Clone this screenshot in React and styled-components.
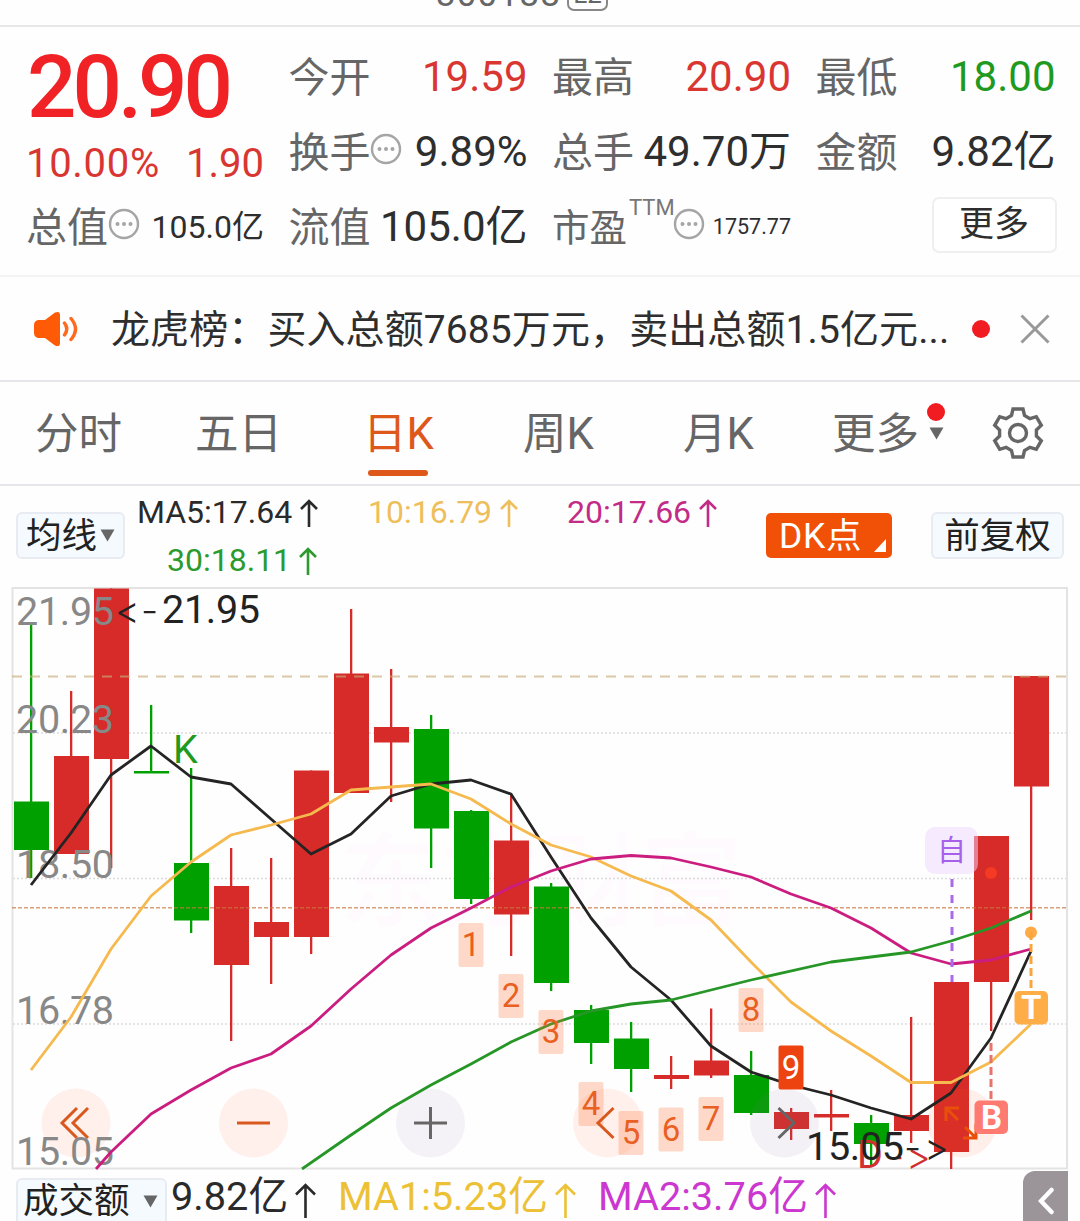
import styled, { createGlobalStyle } from 'styled-components'

const RED = '#d62b28'
const GREEN = '#00a000'

// center x, colour, body top, body bottom, wick top, wick bottom
const candles = [
  [31, GREEN, 801.5, 850, 624, 878],
  [71, RED, 756, 854, 691, 854],
  [111, RED, 588.5, 759, 588.5, 868],
  [151, GREEN, 771, 773.5, 705, 773],
  [191, GREEN, 863, 920.5, 768, 933],
  [231, RED, 886, 965, 848, 1041],
  [271, RED, 922, 937, 858, 984],
  [311, RED, 770.5, 937, 770.5, 954],
  [351, RED, 673.5, 793, 609, 793],
  [391, RED, 727, 742.5, 669, 802],
  [431, GREEN, 729, 828.5, 715, 868],
  [471, GREEN, 811, 899, 810, 904],
  [511, RED, 840.5, 914.5, 795, 956],
  [551, GREEN, 886.5, 983, 883, 991],
  [591, GREEN, 1010, 1043, 1005, 1064],
  [631, GREEN, 1038.5, 1069, 1022, 1092],
  [671, RED, 1075, 1079, 1056, 1089],
  [711, RED, 1060.5, 1075.5, 1008.5, 1078],
  [751, GREEN, 1075, 1113, 1051, 1115],
  [791, RED, 1112, 1129, 1108, 1140],
  [831, RED, 1114, 1117.5, 1090, 1131],
  [871, GREEN, 1123, 1144, 1115, 1165],
  [911, RED, 1115, 1131, 1017, 1143],
  [951, RED, 982, 1152, 982, 1169],
  [991, RED, 836, 982, 836, 1031],
  [1031, RED, 676, 786.5, 676, 920],
]

const ma5 =
  '31,885 71,833 111,775 151,746 191,777 231,784 271,819 311,854 351,834 391,796 431,784 471,780 511,794 551,857 591,918 631,967 671,1000 711,1046 751,1072 791,1085 831,1095 871,1108 911,1119 951,1093 991,1038 1031,951'
const ma10 =
  '31,1070 71,1017 111,949 151,896 191,862 231,835 271,825 311,814 351,790 391,787 431,784 471,799 511,824 551,845 591,857 631,876 671,891 711,920 751,962 791,1002 831,1031 871,1056 911,1082.5 951,1082.5 991,1062 1031,1024'
const ma20 =
  '96,1169 111,1152 151,1114 191,1090 231,1068 271,1054 311,1026 351,989 391,955 431,928 471,908 511,887 551,871 591,859 631,855.5 671,858 711,867 751,877 791,894 831,908 871,928 911,953 951,964 991,960 1031,949'
const ma30 =
  '302,1169 351,1135 391,1108 431,1085 471,1064 511,1042 551,1024 591,1011 631,1004 671,1000 711,990 751,980 831,962 911,952 951,941 991,928 1031,911'

const priceLabels = [
  ['21.95', 624.5],
  ['20.23', 733],
  ['18.50', 878],
  ['16.78', 1024],
  ['15.05', 1165],
]

const countBadges = [
  [1, 471, 923],
  [2, 511, 974],
  [3, 551, 1010],
  [4, 591, 1082],
  [5, 631, 1111],
  [6, 671, 1107.5],
  [7, 711, 1097],
  [8, 751, 988],
  [9, 791, 1045.5],
]

const InfoDots = () => (
  <InfoIcon width="32" height="32" viewBox="0 0 32 32">
    <circle cx="16" cy="16" r="14" fill="none" stroke="#a5a5a5" strokeWidth="2.4" />
    {[9.5, 16, 22.5].map(x => (
      <circle key={x} cx={x} cy="16" r="2" fill="#a5a5a5" />
    ))}
  </InfoIcon>
)

const UpArrow = ({ w = 18, h = 28 }) => (
  <svg width={w} height={h} viewBox={`0 0 ${w} ${h}`} fill="none" stroke="currentColor" strokeWidth="2.6">
    <path d={`M${w / 2} ${h}V2M1 ${w / 2 + 1}L${w / 2} 2L${w - 1} ${w / 2 + 1}`} />
  </svg>
)

const Caret = () => (
  <svg width="15" height="13" viewBox="0 0 15 13">
    <path d="M0.5 0.5H14.5L7.5 12.5Z" fill="#666" />
  </svg>
)

const Speaker = () => (
  <svg width="44" height="36" viewBox="0 0 44 36" fill="none">
    <path
      d="M4 9H11L21 1.5Q26 -0.5 26 4V32Q26 36.500 21 34.500L11 27H4Q0 26 0 22V14Q0 10 4 9Z"
      fill="#ff5a05"
    />
    <path d="M30.500 12Q35 18 30.500 24M37 7.500Q46 18 37 28.500" stroke="#ff6a20" strokeWidth="3.400" strokeLinecap="round" />
  </svg>
)

const Gear = () => (
  <svg width="56" height="56" viewBox="-28 -28 56 56" fill="none" stroke="#666" strokeWidth="3.4">
    <path d="M-6.500 -17.500L-5 -24H5L6.500 -17.500L11.900 -14.400L18.300 -16.300L23.300 -7.700L18.400 -3.100V3.100L23.300 7.700L18.300 16.300L11.900 14.400L6.500 17.500L5 24H-5L-6.500 17.500L-11.900 14.400L-18.300 16.300L-23.300 7.700L-18.400 3.100V-3.100L-23.300 -7.700L-18.300 -16.300L-11.900 -14.400Z" />
    <circle r="8.5" />
  </svg>
)

const Chart = () => (
  <ChartSvg width="1080" height="583" viewBox="0 587 1080 583">
    <WatermarkText x="340" y="918" textLength="402">
      东方财富
    </WatermarkText>
    <g stroke="#dcdcdc" strokeWidth="1.5" strokeDasharray="2 2">
      <path d="M13 733H1067M13 878.500H1067M13 1024H1067" />
    </g>
    <path d="M12.500 588H1067V1168.500H12.500Z" fill="none" stroke="#e3e3e3" strokeWidth="2" />

    {candles.map(([x, color, top, bottom, high, low]) => (
      <g key={x} fill={color}>
        <rect x={x - 1} y={high} width="2.300" height={low - high} />
        <rect x={x - 17} y={top} width="35" height={bottom - top} />
      </g>
    ))}

    <path d="M12 676.500H1067" stroke="#c8aa78" strokeOpacity="0.65" strokeWidth="1.800" strokeDasharray="10 8" />
    <path d="M12 907.700H1067" stroke="#c87840" strokeOpacity="0.7" strokeWidth="1.600" strokeDasharray="4 2" />

    {[
      [76, '#fff0ec'],
      [253.5, '#fff0ec'],
      [430.5, '#f5f2f7'],
      [607.5, '#fff0ec'],
    ].map(([x, fill]) => (
      <circle key={x} cx={x} cy="1123" r="34.500" fill={fill} />
    ))}
    <circle cx="784.500" cy="1123" r="34.500" fill="#8a70a0" fillOpacity="0.09" />
    <circle cx="962" cy="1123" r="34.500" fill="#ff5a20" fillOpacity="0.09" />

    <path d="M77 1108L62 1123L77 1138M88 1108L73 1123L88 1138" fill="none" stroke="#d9581e" strokeWidth="3" />

    {priceLabels.map(([label, y]) => (
      <ChartText key={label} x="16" y={y} textLength="98" $color="#888">
        {label}
      </ChartText>
    ))}

    <g fill="none" strokeWidth="2.800" strokeLinejoin="round">
      <polyline points={ma5} stroke="#242424" />
      <polyline points={ma10} stroke="#f5b94e" />
      <polyline points={ma20} stroke="#cb1d80" />
      <polyline points={ma30} stroke="#269626" />
    </g>

    <ArrowText x="115" y="624" $color="#222">
      &lt;
    </ArrowText>
    <ArrowText x="141" y="624" $color="#222">
      -
    </ArrowText>
    <ChartText x="162" y="623" textLength="98" $color="#222">
      21.95
    </ChartText>
    <ChartText x="173" y="763" $color="#1f9a1f">
      K
    </ChartText>
    <ChartText x="857" y="1168" $color="#d03030">
      D
    </ChartText>
    <ArrowText x="887" y="1170" $color="#d03030">
      -
    </ArrowText>
    <ArrowText x="906" y="1170" $color="#d03030">
      &gt;
    </ArrowText>
    <ChartText x="806" y="1160" textLength="98" $color="#222">
      15.05
    </ChartText>
    <ArrowText x="904" y="1161" $color="#222">
      -
    </ArrowText>
    <ArrowText x="924" y="1161" $color="#222">
      &gt;
    </ArrowText>

    {countBadges.map(([n, x, y]) => (
      <g key={n}>
        <rect
          x={x - 12.5}
          y={y}
          width="25"
          height="44"
          rx="2"
          fill={n === 9 ? '#ec4311' : '#ff6a2a'}
          fillOpacity={n === 9 ? 1 : 0.25}
        />
        <CountText x={x} y={y + 33} $active={n === 9}>
          {n}
        </CountText>
      </g>
    ))}

    <g fill="none" stroke="#d9581e" strokeWidth="3">
      <path d="M237 1123H270" />
      <path d="M613.500 1108L598 1123L613.500 1138" />
      <path d="M946 1121V1108H959M946.500 1108.500L958 1120M976 1124V1138H963M975.500 1137.500L965 1127" stroke="#e8500a" />
    </g>
    <g fill="none" stroke="#666" strokeWidth="3">
      <path d="M414 1123H447M430.500 1107V1139" />
      <path d="M778.500 1108L794 1123L778.500 1138" />
    </g>

    <rect x="925" y="827" width="53" height="47" rx="10" fill="#edd5ff" fillOpacity="0.5" />
    <OwnText x="951.500" y="861">
      自
    </OwnText>
    <path d="M952 879V982" stroke="#aa68ee" strokeWidth="3" strokeDasharray="8 8" />
    <circle cx="991" cy="873" r="6" fill="#f53a23" />
    <circle cx="1031" cy="932.500" r="6" fill="#ffaa45" />
    <path d="M1031 932V990" stroke="#f9a53f" strokeWidth="3" strokeDasharray="8 4" />
    <path d="M991 1043V1100" stroke="#e8736c" strokeWidth="3" strokeDasharray="8 4" />
    <rect x="1014.500" y="991" width="33.500" height="33.500" rx="5" fill="#ffad47" />
    <MarkText x="1031.300" y="1019">
      T
    </MarkText>
    <rect x="974.500" y="1100.500" width="33.500" height="33.500" rx="5" fill="#ff7a70" />
    <MarkText x="991.500" y="1128.500">
      B
    </MarkText>
  </ChartSvg>
)

const App = () => (
  <Page>
    <GlobalStyle />
    <TitleStrip>
      <Code>300188</Code>
      <LevelTag>L2</LevelTag>
    </TitleStrip>

    <Quote>
      <Column $width={237}>
        <Price>20.90</Price>
        <Change>
          <span>10.00%</span>
          <span>1.90</span>
        </Change>
        <Row $height={71}>
          <Label>总值</Label>
          <InfoDots />
          <Value $size={32}>105.0亿</Value>
        </Row>
      </Column>
      <Column $width={238}>
        <Row>
          <Label>今开</Label>
          <Value $color="#d93632">19.59</Value>
        </Row>
        <Row>
          <Label>换手</Label>
          <InfoDots />
          <Value>9.89%</Value>
        </Row>
        <Row>
          <Label>流值</Label>
          <Value>105.0亿</Value>
        </Row>
      </Column>
      <Column $width={238}>
        <Row>
          <Label>最高</Label>
          <Value $color="#d93632">20.90</Value>
        </Row>
        <Row>
          <Label>总手</Label>
          <Value>49.70万</Value>
        </Row>
        <Row>
          <Label $size={37.5}>市盈</Label>
          <Ttm>TTM</Ttm>
          <InfoDots />
          <Value $size={21.5}>1757.77</Value>
        </Row>
      </Column>
      <Column $width={239}>
        <Row>
          <Label>最低</Label>
          <Value $color="#1f9a1f">18.00</Value>
        </Row>
        <Row>
          <Label>金额</Label>
          <Value>9.82亿</Value>
        </Row>
        <Row>
          <MoreButton>更多</MoreButton>
        </Row>
      </Column>
    </Quote>

    <News>
      <Speaker />
      <NewsText>龙虎榜：买入总额7685万元，卖出总额1.5亿元...</NewsText>
      <Dot />
      <svg width="30" height="30" viewBox="0 0 30 30" stroke="#999" strokeWidth="3">
        <path d="M1.500 1.500L28.500 28.500M28.500 1.500L1.500 28.500" />
      </svg>
    </News>

    <Tabs>
      <Tab>分时</Tab>
      <Tab>五日</Tab>
      <Tab $active>日K</Tab>
      <Tab>周K</Tab>
      <Tab>月K</Tab>
      <Tab>
        更多
        <MoreMark>
          <Dot />
          <Caret />
        </MoreMark>
      </Tab>
      <GearTab>
        <Gear />
      </GearTab>
    </Tabs>

    <Indicators>
      <Chip $width={109}>
        均线
        <Caret />
      </Chip>
      <Averages>
        <Average $color="#2a2a2a">
          MA5:17.64
          <UpArrow />
        </Average>
        <Average $color="#efbe5c">
          10:16.79
          <UpArrow />
        </Average>
        <Average $color="#c22c86">
          20:17.66
          <UpArrow />
        </Average>
        <Average $color="#2c9a2c" $indent={30}>
          30:18.11
          <UpArrow />
        </Average>
      </Averages>
      <DkButton>
        DK点
        <svg width="12" height="13" viewBox="0 0 12 13">
          <path d="M12 0V13H0Z" fill="#fff" />
        </svg>
      </DkButton>
      <Chip $width={133}>前复权</Chip>
    </Indicators>

    <Chart />

    <Footer>
      <VolumeChip>
        成交额
        <Caret />
      </VolumeChip>
      <Volume $width={167} $color="#2a2a2a">
        9.82亿
        <UpArrow w={21} h={35} />
      </Volume>
      <Volume $width={260} $color="#ecc136">
        MA1:5.23亿
        <UpArrow w={21} h={35} />
      </Volume>
      <Volume $width={260} $color="#cb37cf">
        MA2:3.76亿
        <UpArrow w={21} h={35} />
      </Volume>
      <Drawer>
        <svg width="16" height="28" viewBox="0 0 16 28" fill="none">
          <path d="M13.500 3L3 14L13.500 25" stroke="#fff" strokeWidth="4.500" strokeLinecap="round" />
        </svg>
      </Drawer>
    </Footer>
  </Page>
)

const GlobalStyle = createGlobalStyle`
  * {
    box-sizing: border-box;
  }

  body {
    margin: 0;
    background: #fff;
    font-family: Roboto, 'Noto Sans CJK SC', sans-serif;
  }

  svg {
    flex: none;
    display: block;
  }
`

const Page = styled.div`
  width: 1080px;
  height: 1221px;
  overflow: hidden;
  background: #fefefe;
  color: #2e2e2e;
  white-space: nowrap;
`

const TitleStrip = styled.div`
  height: 27px;
  display: flex;
  justify-content: center;
  align-items: flex-end;
  gap: 6px;
  padding: 0 36px 14px 0;
  overflow: hidden;
  border-bottom: 2px solid #e8e8e8;
  color: #666;
`

const Code = styled.span`
  margin-bottom: 3px;
  font-size: 35px;
  line-height: 26px;
  letter-spacing: 1.2px;
`

const LevelTag = styled.span`
  border: 2px solid #888;
  border-radius: 7px;
  width: 41px;
  font-size: 26px;
  line-height: 30px;
  text-align: center;
`

const Quote = styled.div`
  height: 250px;
  display: flex;
  gap: 25.5px;
  padding: 12px 0 0 27px;
  border-bottom: 2px solid #f3f3f3;
`

const Column = styled.div`
  width: ${props => props.$width}px;
  display: flex;
  flex-direction: column;
`

const Row = styled.div`
  height: ${props => props.$height || 75}px;
  display: flex;
  align-items: center;
`

const InfoIcon = styled.svg`
  margin: -6px 0 0 -0.5px;
`

const Price = styled.div`
  height: 96px;
  line-height: 97px;
  font-size: 87px;
  font-weight: 500;
  letter-spacing: -4px;
  color: #f02225;
`

const Change = styled.div`
  height: 56px;
  display: flex;
  justify-content: space-between;
  align-items: center;
  font-size: 40px;
  color: #d93632;

  span:first-child {
    margin-left: -1px;
    letter-spacing: 0.7px;
  }
`

const Label = styled.span`
  margin: 3px 0 0 -1px;
  font-size: ${props => props.$size || 41}px;
  line-height: 50px;
  color: #666;
`

const Value = styled.span`
  margin: 1px 0 0 auto;
  font-size: ${props => props.$size || 42}px;
  line-height: 50px;
  color: ${props => props.$color || '#2e2e2e'};
`

const Ttm = styled.span`
  align-self: flex-start;
  margin: 6px -1px 0 2px;
  font-size: 22px;
  color: #777;
`

const MoreButton = styled.button`
  margin: -3px -1px 0 auto;
  width: 125px;
  height: 56px;
  padding: 0;
  border: 2px solid #f0eef0;
  border-radius: 7px;
  background: #fff;
  font: inherit;
  font-size: 35px;
  line-height: 50px;
  color: #2e2e2e;
`

const News = styled.div`
  height: 105px;
  display: flex;
  align-items: center;
  padding: 0 30px 0 34px;
  border-bottom: 2px solid #e6e6ea;
`

const NewsText = styled.span`
  width: 861px;
  margin: -5px 0 0 33px;
  font-size: 39px;
  letter-spacing: 0.1px;
`

const Dot = styled.i`
  width: 18px;
  height: 18px;
  margin-right: 30px;
  border-radius: 50%;
  background: #f01c22;
`

const Tabs = styled.div`
  height: 104px;
  display: grid;
  grid-template-columns: repeat(6, 160px) 1fr;
  border-bottom: 2px solid #e6e6ea;
`

const Tab = styled.div`
  display: flex;
  justify-content: center;
  align-items: center;
  padding: 0 3px 6px 0;
  font-size: 43.5px;
  color: ${props => (props.$active ? '#dd581a' : '#666')};
  position: relative;

  &::after {
    content: '';
    display: ${props => (props.$active ? 'block' : 'none')};
    position: absolute;
    bottom: 8px;
    left: 48px;
    width: 60px;
    height: 6px;
    border-radius: 3px;
    background: #dd581a;
  }
`

const GearTab = styled(Tab)`
  padding: 0 4px 0 0;
`

const MoreMark = styled.span`
  display: flex;
  flex-direction: column;
  align-items: center;
  gap: 6px;
  margin: -18px -20px 0 8px;

  ${Dot} {
    margin: 0;
  }
`

const Indicators = styled.div`
  height: 101px;
  display: flex;
  align-items: flex-start;
  padding: 0 15px 0 16px;
`

const Chip = styled.div`
  width: ${props => props.$width}px;
  height: 47px;
  margin-top: 26px;
  display: flex;
  justify-content: center;
  align-items: center;
  gap: 3px;
  border: 2px solid #e8ebf2;
  border-radius: 6px;
  background: #f5faff;
  font-size: 35.5px;
  line-height: 42px;
  color: #222;
`

const Averages = styled.div`
  width: 641px;
  padding: 2px 0 0 12px;
  display: grid;
  grid-template-columns: 231px 199px 1fr;
  grid-auto-rows: 48px;
`

const Average = styled.div`
  display: flex;
  align-items: center;
  gap: 7.5px;
  padding-left: ${props => props.$indent || 0}px;
  font-size: 32px;
  color: ${props => props.$color};

  svg {
    margin-top: 2px;
  }
`

const DkButton = styled.div`
  width: 126px;
  height: 45px;
  margin: 27px 39px 0 0;
  display: flex;
  align-items: center;
  justify-content: space-between;
  padding: 0 6px 0 13px;
  border-radius: 5px;
  background: #f05106;
  color: #fff;
  font-size: 35.5px;
  letter-spacing: 0.7px;
  line-height: 42px;

  svg {
    margin-top: 20px;
  }
`

const ChartSvg = styled.svg`
  overflow: hidden;
`

const ChartText = styled.text`
  font-size: 39.5px;
  fill: ${props => props.$color};
`

const ArrowText = styled.text`
  font-family: Inter, sans-serif;
  font-size: 38px;
  font-weight: 300;
  fill: ${props => props.$color};
`

const WatermarkText = styled.text`
  font-family: 'Noto Sans CJK SC', sans-serif;
  font-size: 102px;
  font-weight: 500;
  fill: #fefafd;
`

const CountText = styled.text`
  font-size: 33px;
  text-anchor: middle;
  fill: ${props => (props.$active ? '#fff' : '#ea5f22')};
`

const OwnText = styled.text`
  font-size: 29px;
  text-anchor: middle;
  fill: #a660ea;
`

const MarkText = styled.text`
  font-size: 33px;
  font-weight: 700;
  text-anchor: middle;
  fill: #fff;
`

const Footer = styled.div`
  height: 51px;
  display: flex;
  padding: 0 12px 0 16px;
`

const VolumeChip = styled.div`
  width: 151px;
  height: 60px;
  margin: 8px 4px 0 0;
  display: flex;
  align-items: flex-start;
  justify-content: space-between;
  padding: 0 7px 0 5px;
  border: 2px solid #e8ebf2;
  border-radius: 6px;
  background: #f5faff;
  font-size: 35.5px;
  line-height: 43px;
  color: #222;

  svg {
    margin-top: 15px;
  }
`

const Volume = styled.div`
  width: ${props => props.$width}px;
  height: 54px;
  display: flex;
  align-items: center;
  gap: 7px;
  font-size: 39.7px;
  line-height: 46px;
  color: ${props => props.$color};

  svg {
    margin-top: 6px;
  }
`

const Drawer = styled.div`
  width: 45px;
  height: 60px;
  margin: 1px 0 0 auto;
  display: flex;
  justify-content: center;
  align-items: center;
  border-top-left-radius: 12px;
  background: #9b9599;
`

export default App
